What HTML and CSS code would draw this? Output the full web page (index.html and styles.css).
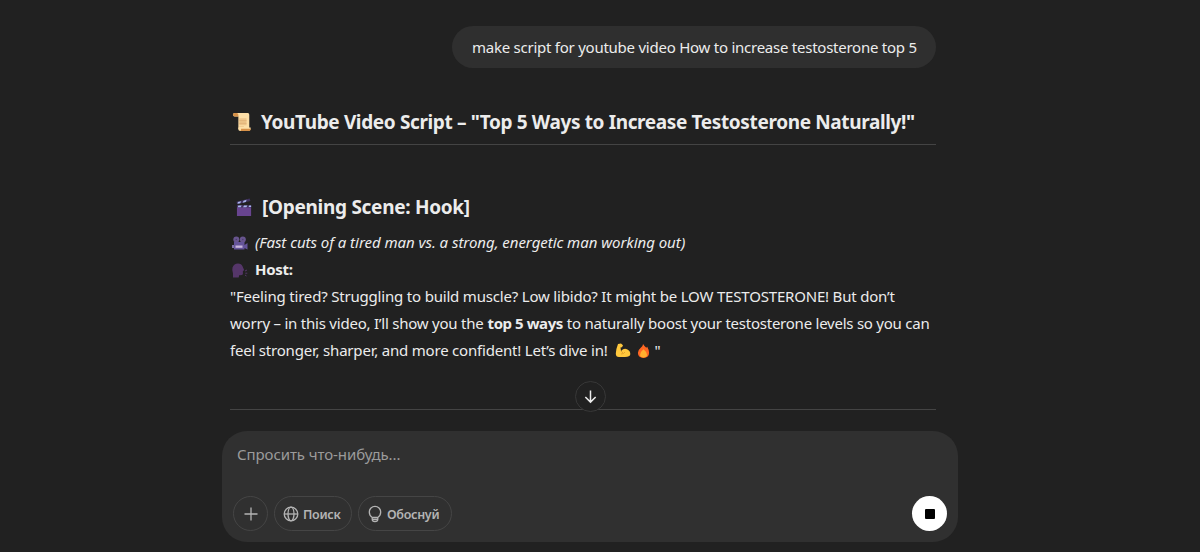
FILE: index.html
```html
<!DOCTYPE html>
<html lang="ru">
<head>
<meta charset="utf-8">
<title>Chat</title>
<link rel="stylesheet" href="styles.css">
</head>
<body>
<main class="thread">
  <div class="bubble"><span class="t-bubble">make script for youtube video How to increase testosterone top 5</span></div>
  <h1 class="title">
    <svg class="scroll" viewBox="0 0 22 22"><path d="M3 1h14.500q1.500 0 1.500 2v16H7V5H3Q1 5 1 3t2-2z" fill="#fddfa7"/><path d="M1 3q0-2 2-2h2q2 0 2 2v2H3Q1 5 1 3z" fill="#d79148"/><path d="M7 17h13.500v1q0 3-3 3H9q-2 0-2-2z" fill="#fddfa7"/><path d="M10 18.500h10.700q0 2.500-3 2.500H8.500q2 0 1.500-2.500z" fill="#d79148"/><path d="M8 7h8v7.500H8zM8 15.300h5v1H8z" fill="#eec58a"/><path d="M8 9.500h8M8 12.500h8" stroke="#dcae74" stroke-width=".8"/></svg>
    <span class="t-title">YouTube Video Script – "Top 5 Ways to Increase Testosterone Naturally!"</span>
  </h1>
  <h2 class="scene">
    <svg class="clap" viewBox="0 0 18 20"><path d="M1 8h15v11H1z" fill="#68448f"/><path d="M1 7.500h15V10H1z" fill="#403260"/><path d="M.5 4L14.500.500l.8 2.500L1.300 6.500z" fill="#403260"/><path d="M2 4.300l3.500-.9-1 2L1.700 6zM8 2.800l3.300-.9-1 2.200-3.300.8zM2.500 8H6L5 9.700H1.800zM8.500 8H12l-1 1.700H7.500zM14 8h2v1.500h-2.700z" fill="#a9b7ed"/></svg>
    <span class="t-scene">[Opening Scene: Hook]</span>
  </h2>
  <div class="copy">
    <div class="line"><svg class="mini" viewBox="0 0 16 15"><circle cx="4.300" cy="3.500" r="3" fill="#68558f"/><circle cx="10.800" cy="3.500" r="3" fill="#68558f"/><circle cx="4.300" cy="3.500" r=".8" fill="#4c3f6d"/><circle cx="10.800" cy="3.500" r=".8" fill="#4c3f6d"/><path d="M2 6h10.500v7.500H2zM12.500 9L15.500 7v6.500l-3-1.500z" fill="#65549a"/><path d="M0 9h2v3H0z" fill="#7d72a5"/><path d="M3.500 9.500h7v2.300h-7z" fill="#c9b7dd"/></svg><em class="t-cue">(Fast cuts of a tired man vs. a strong, energetic man working out)</em></div>
    <div class="line"><svg class="mini" viewBox="0 0 16 15"><path d="M1 14.500v-4Q-.2 7 .5 4.500 2 .5 6 .5q3.500 0 4.600 3l1.600 3.800-1.300.7v3q0 1.500-3.500 1l-.8 2.500z" fill="#553669"/><path d="M13 8l2-1M13.300 10.200h2M13 12l1.500 1" stroke="#553669"/></svg><strong class="t-host">Host:</strong></div>
    <div class="line"><span class="t-one">"Feeling tired? Struggling to build muscle? Low libido? It might be LOW TESTOSTERONE! But don’t</span></div>
    <div class="line"><span class="t-two">worry – in this video, I’ll show you the</span><strong class="t-ways">top 5 ways</strong><span class="t-rest">to naturally boost your testosterone levels so you can</span></div>
    <div class="line"><span class="t-three">feel stronger, sharper, and more confident! Let’s dive in!</span><svg class="arm" viewBox="0 0 16 15"><path d="M3 1L6 .5l2 1.800-1 2-1.500.3L6 8q3-3.300 6-1.700 3.500 1.700 3.300 5-.3 2.700-5.300 2.700H4Q.8 14 .8 10.500 1 6 3 1z" fill="#ffc83d"/><path d="M6 8l2 2M10 9q-1 2-4 2" stroke="#e09a28" stroke-width=".8" fill="none"/></svg><svg class="fire" viewBox="0 0 14 16"><path d="M6.500.5Q8 3 10 4.500l1-1Q13 7 13 10q0 5.500-6 5.500T1 10q0-3 2.800-5.200Q6.500 3 6.500.5z" fill="#ff6723"/><path d="M7 6q3.800 3 3.800 6 0 3-3.800 3T3.300 12Q3.300 9 7 6z" fill="#ffb02e"/></svg><span>"</span></div>
  </div>
  <hr class="rule">
  <button class="down" aria-label="down"><svg viewBox="0 0 16 16"><path d="M8 1.500V14M2.500 8.500L8 14l5.500-5.500"/></svg></button>
</main>
<section class="composer">
  <div class="prompt"><span class="t-prompt">Спросить что-нибудь...</span></div>
  <div class="tools">
    <button class="chip plus" aria-label="add"><svg viewBox="0 0 16 16"><path d="M8 1.500v13M1.500 8h13"/></svg></button>
    <button class="chip search"><svg viewBox="0 0 16 16"><circle cx="8" cy="8" r="6.800"/><ellipse cx="8" cy="8" rx="3" ry="6.800"/><path d="M1.200 8h13.600"/></svg><span class="t-search">Поиск</span></button>
    <button class="chip reason"><svg viewBox="0 0 16 18"><path d="M5.200 12.500Q2.300 10.500 2.300 7a5.700 5.700 0 0 1 11.400 0q0 3.500-2.900 5.500zM5.200 12.500v1.700q0 2.300 2.800 2.300t2.800-2.300v-1.700M5.200 14.300h5.600"/></svg><span class="t-reason">Обоснуй</span></button>
    <button class="stop" aria-label="stop"><i></i></button>
  </div>
</section>
</body>
</html>
```
FILE: styles.css
```css
* { box-sizing: border-box; }
body { margin: 0; height: 552px; overflow: hidden; background: #212121; color: #ececec; font-family: "Noto Sans", "Open Sans", sans-serif; font-size: 15px; }
button { padding: 0; font: inherit; color: inherit; background: none; }
svg { display: block; flex: none; overflow: visible; }
span, em, strong { white-space: pre; }
.thread { width: 706px; height: 431px; margin-left: 230px; padding-top: 26px; display: flex; flex-direction: column; }
.bubble { align-self: flex-end; width: 484px; height: 42px; padding-left: 20px; border-radius: 21px; background: #2f2f2f; line-height: 43px; }
.title, .scene { display: flex; align-items: center; margin: 0; font-size: 19px; font-weight: 700; line-height: 30px; }
.title { height: 46px; margin-top: 31px; padding: 1px 0 0 2px; border-bottom: 1px solid #444; }
.scroll { width: 20px; height: 20px; margin-right: 9px; }
.scene { margin-top: 47px; padding-left: 6px; }
.clap { width: 17px; height: 19px; margin-right: 9px; }
.copy { margin-top: 7px; }
.line { display: flex; align-items: center; height: 27px; line-height: 27px; }
.mini { width: 16px; height: 15px; margin: 2px 7px 0 2px; }
.t-bubble { letter-spacing: -0.247px; }
.t-title { letter-spacing: -0.367px; }
.t-scene { letter-spacing: -0.29px; }
.t-cue { letter-spacing: -0.04px; }
.t-host { letter-spacing: -0.3px; }
.t-one { letter-spacing: -0.19px; }
.t-two { letter-spacing: -0.22px; }
.t-ways { letter-spacing: -0.44px; }
.t-rest { letter-spacing: -0.24px; }
.t-three { letter-spacing: -0.2px; }
.t-prompt { letter-spacing: -0.08px; }
.t-search, .t-reason { letter-spacing: -0.3px; }
.t-two, .t-ways { margin-right: 4px; }
.arm { width: 16px; height: 15px; margin-left: 7px; }
.fire { width: 13px; height: 16px; margin: 0 5px 0 6px; }
.rule { width: 100%; margin: 45px 0 0; border: 0; border-top: 1px solid #444; }
.down { display: flex; align-items: center; justify-content: center; align-self: center; width: 31px; height: 31px; margin-top: -29px; margin-left: 15px; border: 1px solid #383838; border-radius: 50%; background: #212121; position: relative; }
.down svg { width: 15px; height: 15px; fill: none; stroke: #ececec; stroke-width: 1.6; }
.composer { width: 736px; height: 111px; margin-left: 222px; padding: 9px 11px 11px; border-radius: 25px; background: #303030; display: flex; flex-direction: column; justify-content: space-between; }
.prompt { padding-left: 4px; color: #9b9b9b; line-height: 28px; }
.tools { display: flex; align-items: center; gap: 6px; }
.chip { display: flex; align-items: center; height: 35px; border: 1px solid #454545; border-radius: 18px; color: #b4b4b4; font-size: 12.5px; font-weight: 600; }
.chip span { padding-top: 2px; }
.chip svg { width: 16px; height: 16px; fill: none; stroke: #b4b4b4; stroke-width: 1.3; }
.plus { width: 35px; justify-content: center; }
.search { width: 78px; padding-left: 8px; }
.search svg { margin-right: 4px; }
.reason { width: 94px; padding-left: 8px; }
.reason svg { height: 18px; margin-right: 4px; }
.stop { display: flex; align-items: center; justify-content: center; width: 35px; height: 35px; margin-left: auto; border: 0; border-radius: 50%; background: #fff; }
.stop i { width: 10px; height: 10px; border-radius: 1px; background: #000; }
```
